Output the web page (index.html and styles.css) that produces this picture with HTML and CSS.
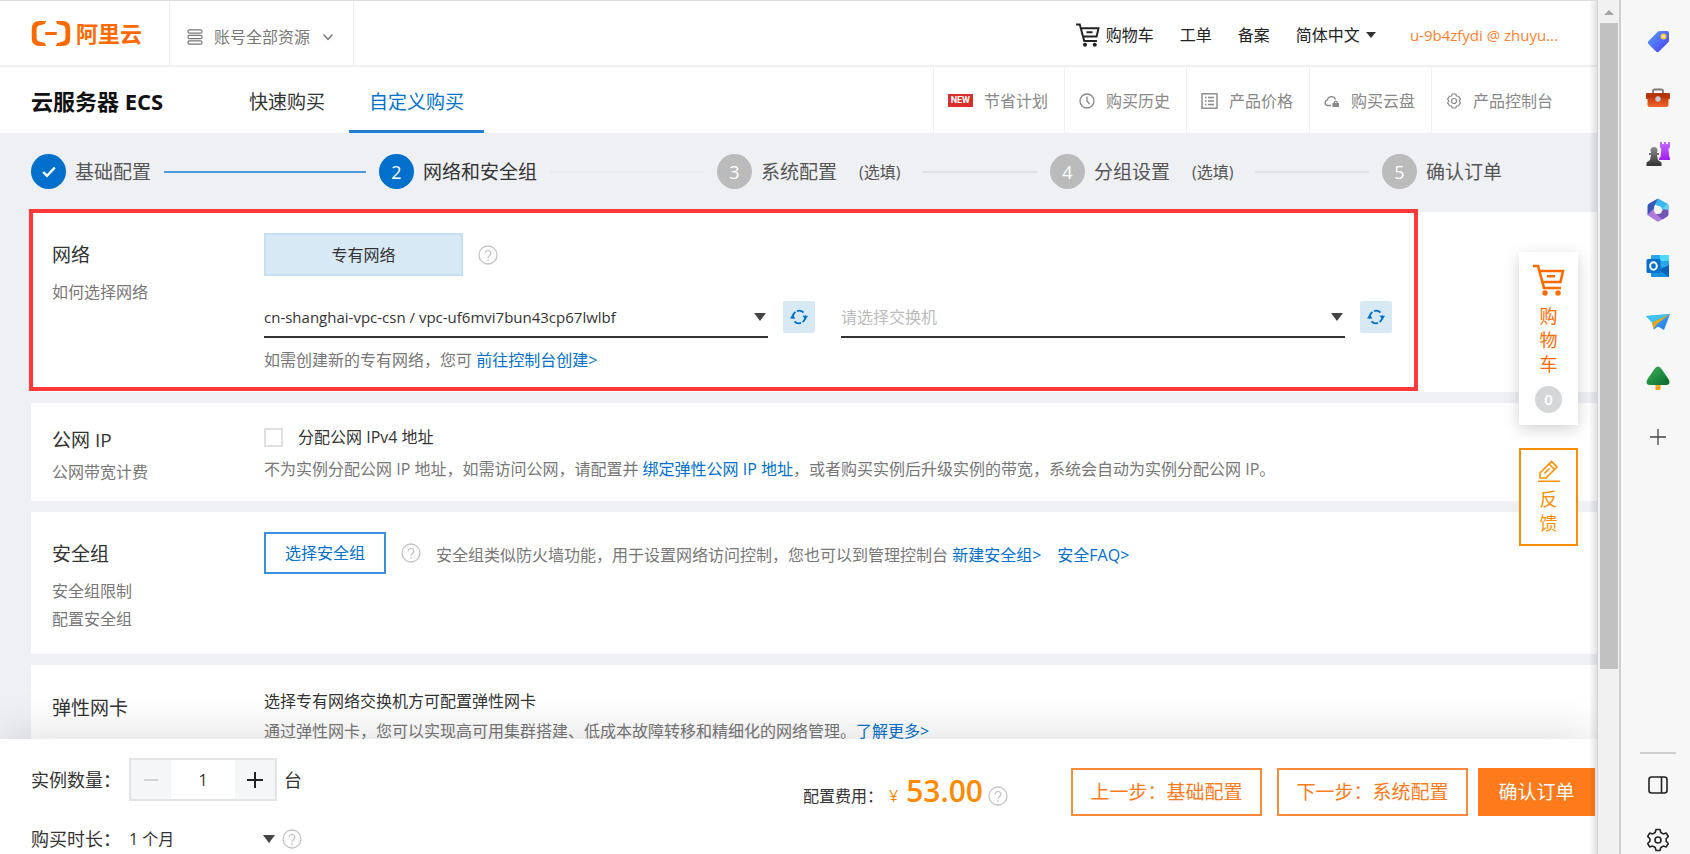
FILE: index.html
```html
<!DOCTYPE html>
<html lang="zh-CN">
<head>
<meta charset="utf-8">
<title>云服务器 ECS - 自定义购买</title>
<link rel="stylesheet" href="styles.css">
</head>
<body>
<svg class="defs" aria-hidden="true">
  <symbol id="i-help" viewBox="0 0 20 20"><circle cx="10" cy="10" r="9" fill="none" stroke="currentColor" stroke-width="1.3"/><path d="M7.2 8.2a2.8 2.8 0 1 1 4.4 2.3c-1 .7-1.6 1-1.6 2.2" fill="none" stroke="currentColor" stroke-width="1.3"/><circle cx="10" cy="14.8" r=".9" fill="currentColor"/></symbol>
  <symbol id="i-refresh" viewBox="0 0 18 18"><path d="M3 10.500A6.200 6.200 0 0 1 5.500 4M7 3.100A6.200 6.200 0 0 1 13.500 4.500M15 7.500a6.200 6.200 0 0 1-2.500 6.500M11 14.900a6.200 6.200 0 0 1-6.500-1.400" fill="none" stroke="currentColor" stroke-width="1.800"/><path d="M0 10.500l2.500-4 3 4zM12.500 7.800h5.500l-2.500 4z" fill="currentColor"/></symbol>
  <symbol id="i-cart" viewBox="0 0 32 32"><path d="M0 2h5l6 22h17M6.500 7H30l-2.500 11H9.500M14 12.300h8" fill="none" stroke="currentColor" stroke-width="2.600"/><circle cx="12" cy="29" r="2.700" fill="currentColor"/><circle cx="25" cy="29" r="2.700" fill="currentColor"/></symbol>
  <linearGradient id="g-tag" x1="0" y1="0" x2="1" y2="1"><stop offset="0" stop-color="#5fa5ff"/><stop offset="1" stop-color="#4338f0"/></linearGradient>
  <linearGradient id="g-box" x1="0" y1="0" x2="0" y2="1"><stop offset="0" stop-color="#c93f12"/><stop offset="1" stop-color="#f0642b"/></linearGradient>
  <linearGradient id="g-pawn" x1="0" y1="0" x2="0" y2="1"><stop offset="0" stop-color="#8d8d8d"/><stop offset="1" stop-color="#333"/></linearGradient>
  <linearGradient id="g-rook" x1="0" y1="0" x2="0" y2="1"><stop offset="0" stop-color="#c56bff"/><stop offset="1" stop-color="#a01cf5"/></linearGradient>
  <linearGradient id="g-tree" x1="0" y1="0" x2="1" y2="1"><stop offset="0" stop-color="#3cb45a"/><stop offset="1" stop-color="#08682c"/></linearGradient>
  <linearGradient id="g-plane" x1="0" y1="0" x2="1" y2="1"><stop offset="0" stop-color="#35c3f3"/><stop offset="1" stop-color="#2a6ff0"/></linearGradient>
</svg>

<div class="page">
  <header class="top">
    <a class="logo" href="#" aria-label="阿里云">
      <svg class="logo-mark" viewBox="0 0 40 26"><path d="M15 0H8Q0 0 0 8v10q0 8 8 8h7l-1.500-3-6-1.800Q5 20.500 5 18V8q0-2.500 2.500-3.200l6-1.800zM25 0h7q8 0 8 8v10q0 8-8 8h-7l1.500-3 6-1.800Q35 20.500 35 18V8q0-2.500-2.500-3.200l-6-1.800zM14 11.500h12v3H14z" fill="#ff6a00"/></svg>
      <span>阿里云</span>
    </a>
    <button class="account" type="button">
      <svg width="16" height="16" viewBox="0 0 16 16" fill="none" stroke="currentColor" stroke-width="1.200"><rect x="1" y=".8" width="14" height="3.400" rx="1.500"/><rect x="1" y="6.300" width="14" height="3.400" rx="1.500"/><rect x="1" y="11.800" width="14" height="3.400" rx="1.500"/></svg>
      <span>账号全部资源</span>
      <svg width="10" height="8" viewBox="0 0 10 8" fill="none" stroke="currentColor" stroke-width="1.500"><path d="M.5 1.500L5 6.500l4.500-5"/></svg>
    </button>
    <nav class="menu">
      <a class="menu-cart" href="#"><svg width="24" height="24"><use href="#i-cart"/></svg>购物车</a>
      <a href="#">工单</a>
      <a href="#">备案</a>
      <a class="lang" href="#">简体中文<i class="caret"></i></a>
      <a class="user" href="#">u-9b4zfydi @ zhuyu...</a>
    </nav>
  </header>

  <div class="product">
    <h1>云服务器 ECS</h1>
    <nav class="tabs">
      <a href="#">快速购买</a>
      <a class="active" href="#">自定义购买</a>
    </nav>
    <nav class="links">
      <a href="#"><span class="new">NEW</span>节省计划</a>
      <a href="#"><svg width="16" height="16" viewBox="0 0 16 16" fill="none" stroke="currentColor" stroke-width="1.300"><circle cx="8" cy="8" r="7"/><path d="M8 3.500V8l2.500 3"/></svg>购买历史</a>
      <a href="#"><svg width="17" height="16" viewBox="0 0 17 16" fill="none" stroke="currentColor" stroke-width="1.400"><rect x="1" y=".8" width="15" height="14.400"/><path d="M4 4.500h1.500M7 4.500h6M4 8h1.500M7 8h6M4 11.500h1.500M7 11.500h6"/></svg>产品价格</a>
      <a href="#"><svg width="16" height="14" viewBox="0 0 16 14" fill="none" stroke="currentColor" stroke-width="1.300"><path d="M7 11.500H3.500a2.700 2.700 0 0 1-.3-5.300A4.300 4.300 0 0 1 11.500 5.500"/><path d="M10.300 9.500V8.800a1.500 1.500 0 0 1 3 0v.7"/><rect x="8.500" y="9" width="6.500" height="4" fill="currentColor" stroke="none"/></svg>购买云盘</a>
      <a href="#"><svg width="16" height="16" viewBox="0 0 16 16" fill="none" stroke="currentColor" stroke-width="1.200"><path d="M6.300 1h3.400l.8 2 2 .2 1.900 2.900L13.200 8l1.200 1.900-1.900 2.900-2 .2-.8 2H6.300l-.8-2-2-.2-1.900-2.900L2.800 8 1.600 6.100l1.900-2.900 2-.2z"/><circle cx="8" cy="8" r="2.500"/></svg>产品控制台</a>
    </nav>
  </div>

  <main class="content">
    <ol class="steps">
      <li class="done"><span class="dot"><svg width="14" height="12" viewBox="0 0 14 12" fill="none" stroke="#fff" stroke-width="2.400"><path d="M1.200 6l3.800 3.800L12.800 1.500"/></svg></span><span>基础配置</span><i class="line"></i></li>
      <li class="current"><span class="dot">2</span><span>网络和安全组</span><i class="line"></i></li>
      <li><span class="dot">3</span><span>系统配置</span><small>(选填)</small><i class="line"></i></li>
      <li><span class="dot">4</span><span>分组设置</span><small>(选填)</small><i class="line"></i></li>
      <li><span class="dot">5</span><span>确认订单</span></li>
    </ol>

    <section class="card network">
      <div class="side"><h2>网络</h2><a href="#">如何选择网络</a></div>
      <div class="body">
        <div class="row"><button class="choice" type="button">专有网络</button><svg class="help"><use href="#i-help"/></svg></div>
        <div class="pickers">
          <div class="select vpc"><select aria-label="专有网络"><option>cn-shanghai-vpc-csn / vpc-uf6mvi7bun43cp67lwlbf</option></select></div>
          <button class="refresh" type="button" aria-label="刷新专有网络"><svg width="18" height="18"><use href="#i-refresh"/></svg></button>
          <div class="select empty"><select aria-label="交换机"><option>请选择交换机</option></select></div>
          <button class="refresh" type="button" aria-label="刷新交换机"><svg width="18" height="18"><use href="#i-refresh"/></svg></button>
        </div>
        <p>如需创建新的专有网络，您可 <a href="#">前往控制台创建&gt;</a></p>
      </div>
    </section>

    <section class="card public-ip">
      <div class="side"><h2>公网 IP</h2><a href="#">公网带宽计费</a></div>
      <div class="body">
        <label class="check"><input type="checkbox">分配公网 IPv4 地址</label>
        <p>不为实例分配公网 IP 地址，如需访问公网，请配置并 <a href="#">绑定弹性公网 IP 地址</a>，或者购买实例后升级实例的带宽，系统会自动为实例分配公网 IP。</p>
      </div>
    </section>

    <section class="card security">
      <div class="side"><h2>安全组</h2><a href="#">安全组限制</a><a href="#">配置安全组</a></div>
      <div class="body">
        <div class="row"><button class="outline" type="button">选择安全组</button><svg class="help"><use href="#i-help"/></svg><p>安全组类似防火墙功能，用于设置网络访问控制，您也可以到管理控制台 <a href="#">新建安全组&gt;</a><a class="faq" href="#">安全FAQ&gt;</a></p></div>
      </div>
    </section>

    <section class="card eni">
      <div class="side"><h2>弹性网卡</h2></div>
      <div class="body">
        <p class="strong">选择专有网络交换机方可配置弹性网卡</p>
        <p>通过弹性网卡，您可以实现高可用集群搭建、低成本故障转移和精细化的网络管理。<a href="#">了解更多&gt;</a></p>
      </div>
    </section>
  </main>

  <footer class="bar">
    <div class="order">
      <div class="field"><label for="count">实例数量：</label><div class="stepper"><button type="button" aria-label="减少" disabled><svg width="16" height="16" viewBox="0 0 16 16" stroke="#d2d5d8" stroke-width="2"><path d="M1 8h14"/></svg></button><input id="count" type="text" value="1"><button type="button" aria-label="增加"><svg width="18" height="18" viewBox="0 0 18 18" stroke="#222" stroke-width="2"><path d="M1 9h16M9 1v16"/></svg></button></div><span class="unit">台</span></div>
      <div class="field"><label for="period">购买时长：</label><div class="select period"><select id="period"><option>1 个月</option></select></div><svg class="help"><use href="#i-help"/></svg></div>
    </div>
    <div class="cost"><span>配置费用：</span><span class="yen">¥</span><strong>53.00</strong><svg class="help"><use href="#i-help"/></svg></div>
    <div class="actions">
      <button type="button">上一步：基础配置</button>
      <button type="button">下一步：系统配置</button>
      <button class="primary" type="button">确认订单</button>
    </div>
  </footer>

  <aside class="floats">
    <a class="float-cart" href="#"><svg width="32" height="32"><use href="#i-cart"/></svg><span>购物车</span><b>0</b></a>
    <a class="feedback" href="#"><svg width="22" height="22" viewBox="0 0 22 22" fill="none" stroke="currentColor" stroke-width="1.600"><path d="M2 18v-5L13.500 1.500l5.500 5.500L8 18zM11 4l5.500 5.500M6.500 13.500l5-5M0 21.200h22"/></svg><span>反馈</span></a>
  </aside>
</div>

<div class="scrollbar"><i class="up"></i><i class="thumb"></i></div>

<aside class="rail">
  <button type="button" aria-label="购物"><svg width="24" height="24" viewBox="0 0 24 24"><path d="M2.500 11L11.500 2q1-1 2.500-1h7q2 0 2 2v7q0 1.500-1 2.500l-9 9q-1.500 1.500-3 0l-7.500-7.500q-1.500-1.500 0-3z" fill="url(#g-tag)"/><circle cx="17.500" cy="6.500" r="3" fill="#f6c945"/><circle cx="17.500" cy="6.500" r="1.200" fill="#fff2b8"/></svg></button>
  <button type="button" aria-label="工具"><svg width="24" height="24" viewBox="0 0 24 24"><path d="M7 8V5q0-1.500 1.500-1.500h7Q17 3.500 17 5v3" fill="none" stroke="#7b7b7b" stroke-width="1.800"/><path d="M1 7h22q1 0 1 1v5H0V8q0-1 1-1z" fill="#b8360e"/><path d="M1.500 12h21v7q0 2-2 2h-17q-2 0-2-2z" fill="url(#g-box)"/><circle cx="12" cy="13" r="2.700" fill="#c5c8cc"/></svg></button>
  <button type="button" aria-label="游戏"><svg width="24" height="24" viewBox="0 0 24 24"><path d="M14 0h2v2h2V0h2v2h2V0h2v5l-1.500 2 .8 8 1.200 1v2H13v-2l1.500-1 .8-8L14 5z" fill="url(#g-rook)"/><path d="M4.500 8.500a3.500 3.500 0 1 1 7 0L11 11h2v2h-2l1 5 3.500 2.500V24H.5v-3.500L4 18l1-5H3v-2h2z" fill="url(#g-pawn)"/></svg></button>
  <button type="button" aria-label="Microsoft 365"><svg width="24" height="24" viewBox="0 0 24 24"><path d="M12 .5l9.500 5.300v6.700l-6-1L12 8 8.500 6z" fill="#3cb6ee"/><path d="M12 .5L3 5.500q-1.500 1-1.500 3V17L8 14V9z" fill="#3557b7"/><path d="M1.500 17l9 6q1.500 1 3 0l5-3-9-4.500-2-5z" fill="#b07bdc"/><path d="M21.500 5.800q1 1 1 2.500v8q0 1.500-1.500 2.500l-4.500 2.700L10 16l6-3z" fill="#7255b5"/><path d="M16 11l6.500 1V8q0-1.500-1-2.200z" fill="#62d4f3"/><circle cx="12" cy="12" r="4" fill="#f7f7f7"/></svg></button>
  <button type="button" aria-label="Outlook"><svg width="24" height="24" viewBox="0 0 24 24"><path d="M6 1h16q1 0 1 1v11H5V2q0-1 1-1z" fill="#28a8ea"/><path d="M14 1h8q1 0 1 1v5h-9z" fill="#50d9ff"/><path d="M5 13h18v9q0 1-1 1H6q-1 0-1-1z" fill="#1490df"/><path d="M23 11v12L13 16z" fill="#0a63b8"/><rect x=".5" y="5" width="14" height="14" rx="1.500" fill="#0a6fcb"/><ellipse cx="7.500" cy="12" rx="3.300" ry="3.700" fill="none" stroke="#fff" stroke-width="2"/></svg></button>
  <button type="button" aria-label="投递"><svg width="24" height="24" viewBox="0 0 24 24"><path d="M0 6l24-2-6 16-6-3.500-4 3-2-7z" fill="url(#g-plane)"/><path d="M0 6l24-2L6 12.500z" fill="#3fc3f4"/><path d="M24 4L6 12.500l1.500 6.500L11 14z" fill="#e8a621"/></svg></button>
  <button type="button" aria-label="树"><svg width="24" height="24" viewBox="0 0 24 24"><rect x="9.500" y="17" width="5" height="7" rx="1" fill="#f2a31c"/><path d="M12 .5q2 0 4 3l3 4.500q4.500 6 4.500 8 0 3-3.500 3H4q-3.500 0-3.500-3 0-2 4.500-8L8 3.500q2-3 4-3z" fill="url(#g-tree)"/></svg></button>
  <button type="button" aria-label="添加"><svg width="16" height="16" viewBox="0 0 16 16" stroke="#444" stroke-width="1.300"><path d="M0 8h16M8 0v16"/></svg></button>
  <div class="rail-end">
    <button type="button" aria-label="侧栏"><svg width="20" height="18" viewBox="0 0 20 18" fill="none" stroke="#222" stroke-width="1.600"><rect x="1" y="1" width="18" height="16" rx="2.500"/><path d="M13.500 1v16"/></svg></button>
    <button type="button" aria-label="设置"><svg width="24" height="24" viewBox="0 0 24 24" fill="none" stroke="#222" stroke-width="1.600"><path d="M10 1.500h4l.8 3 2.500 1.400 3-.8 2 3.400-2.200 2.200v2.600l2.200 2.200-2 3.400-3-.8-2.500 1.400-.8 3h-4l-.8-3-2.500-1.400-3 .8-2-3.400 2.200-2.200v-2.600L1.700 8.500l2-3.400 3 .8 2.500-1.400z" stroke-linejoin="round"/><circle cx="12" cy="12" r="3"/></svg></button>
  </div>
</aside>
</body>
</html>
```
FILE: styles.css
```css
* {
  box-sizing: border-box;
}

body {
  margin: 0;
  height: 100vh;
  display: flex;
  overflow: hidden;
  font: 16px/24px "Open Sans", "Noto Sans CJK SC", sans-serif;
  color: #333;
  background: #fff;
}

h1, h2, p, ol {
  margin: 0;
  padding: 0;
  font-weight: 400;
}

a {
  color: #0070cc;
  text-decoration: none;
}

button, input, select {
  font: inherit;
  color: inherit;
  margin: 0;
  padding: 0;
  border: 0;
  border-radius: 0;
  background: none;
}

svg {
  display: block;
  flex: none;
}

.defs {
  position: absolute;
  width: 0;
  height: 0;
}

.page {
  position: relative;
  flex: 1;
  min-width: 0;
  display: flex;
  flex-direction: column;
  overflow: hidden;
  border-top: 1px solid #dcdcdc;
}

.page::after {
  content: "";
  position: absolute;
  top: 0;
  right: 0;
  bottom: 0;
  width: 8px;
  background: linear-gradient(to right, transparent, rgba(0, 0, 0, .12));
}

/* top bar */
.top {
  display: flex;
  height: 66px;
  flex: none;
  border-bottom: 2px solid #f0f0f0;
}

.logo {
  display: flex;
  align-items: center;
  gap: 5px;
  width: 170px;
  padding-left: 31px;
  border-right: 1px solid #ebebeb;
  color: #ff6a00;
  font-size: 22px;
  font-weight: 700;
}

.logo-mark {
  width: 40px;
  height: 25px;
}

.account {
  display: flex;
  align-items: center;
  gap: 11px;
  width: 184px;
  padding: 8px 0 0 17px;
  border-right: 1px solid #ebebeb;
  color: #777;
}

.account svg:last-child {
  margin-left: 2px;
}

.menu {
  display: flex;
  align-items: center;
  gap: 26px;
  margin-left: auto;
  padding: 4px 39px 0 0;
}

.menu a {
  color: #222;
}

.menu .menu-cart,
.menu .lang {
  display: flex;
  align-items: center;
  gap: 6px;
}

.menu .user {
  color: #ff7f2e;
  margin-left: 8px;
  font-size: 15px;
}

.caret {
  border: 5px solid transparent;
  border-top: 6px solid #333;
  border-bottom: 0;
}

/* product bar */
.product {
  display: flex;
  align-items: stretch;
  height: 66px;
  flex: none;
}

.product h1 {
  width: 193px;
  padding: 22px 0 0 31px;
  font-size: 22px;
  font-weight: 700;
  color: #111;
  white-space: nowrap;
}

.tabs {
  display: flex;
  margin-left: 31px;
}

.tabs a {
  padding: 23px 20px 0;
  font-size: 19px;
  color: #333;
  border-bottom: 3px solid transparent;
}

.tabs a:first-child {
  padding: 23px 24px 0 25px;
}

.tabs .active {
  color: #0070cc;
  border-color: #1f7fd2;
}

.links {
  display: flex;
  margin-left: auto;
  padding-right: 28px;
}

.links a {
  display: flex;
  align-items: center;
  gap: 11px;
  padding: 1px 16px 0 14px;
  border-left: 1px solid #f0f0f0;
  color: #888;
}

.new {
  padding: 0 3px;
  background: #d9302c;
  color: #fff;
  font: 700 9px/13px Roboto, sans-serif;
}

/* scrolling content */
.content {
  flex: 1;
  min-height: 0;
  overflow: hidden;
  display: flex;
  flex-direction: column;
  gap: 11px;
  padding-left: 31px;
  background: #eff0f4;
}

.steps {
  display: grid;
  grid-template-columns: 348fr 338fr 333fr 332fr auto;
  align-items: center;
  height: 79px;
  flex: none;
  margin-bottom: -11px;
  padding: 0 95px 2px 0;
  list-style: none;
  font-size: 19px;
}

.steps li {
  display: flex;
  align-items: center;
  white-space: nowrap;
  color: #555;
}

.steps .current {
  color: #333;
}

.dot {
  display: flex;
  align-items: center;
  justify-content: center;
  width: 35px;
  height: 35px;
  margin-right: 9px;
  border-radius: 50%;
  background: #bbb;
  color: #fff;
  font-size: 18px;
}

.done .dot,
.current .dot {
  background: #0070cc;
}

.steps small {
  margin: 0 9px 0 22px;
  font-size: 16px;
}

.line {
  flex: 1;
  height: 2px;
  margin: 0 13px;
  background: #e0e1e5;
}

.done .line {
  background: #4c9bdc;
}

.current .line {
  background: #e9eaed;
}

.card {
  position: relative;
  display: flex;
  flex: none;
  padding-left: 21px;
  background: #fff;
}

.side {
  display: flex;
  flex-direction: column;
  gap: 4px;
  width: 212px;
  flex: none;
}

.side h2 {
  font-size: 19px;
  line-height: 24px;
}

.side a,
.body p {
  color: #777;
}

.body p a {
  color: #0070cc;
}

.body {
  flex: 1;
  min-width: 0;
  display: flex;
  flex-direction: column;
  white-space: nowrap;
}

.body .strong {
  color: #333;
}

.row {
  display: flex;
  align-items: center;
  gap: 15px;
}

.help {
  width: 20px;
  height: 20px;
  color: #c4c4c4;
}

.network {
  padding: 21px 0 19px 21px;
}

.network::after {
  content: "";
  position: absolute;
  inset: -3px 179px 1px -2px;
  border: 4px solid #ff3838;
}

.network .side,
.security .side {
  padding-top: 10px;
}

.network h2,
.security h2 {
  margin-bottom: 9px;
}

.choice {
  width: 199px;
  height: 43px;
  border: 2px solid #c5dff5;
  background: #d8e9f6;
}

.pickers {
  display: flex;
  align-items: flex-start;
  margin: 25px 205px 10px 0;
}

.select {
  position: relative;
  flex: 1;
  border-bottom: 2px solid #333;
}

.select::after {
  content: "";
  position: absolute;
  right: 2px;
  top: 12px;
  border: 6px solid transparent;
  border-top: 8px solid #444;
  border-bottom: 0;
  pointer-events: none;
}

.select select {
  display: block;
  width: 100%;
  height: 35px;
  padding-bottom: 4px;
  appearance: none;
}

.vpc {
  font-size: 15px;
}

.empty {
  color: #bbb;
}

.refresh {
  display: flex;
  align-items: center;
  justify-content: center;
  width: 32px;
  height: 32px;
  margin: 0 26px 0 15px;
  border-radius: 2px;
  background: #d8e9f6;
  color: #0070cc;
}

.refresh:last-child {
  margin-right: 0;
}

.network .body {
  padding-bottom: 1px;
}

.public-ip {
  padding: 22px 0 17px 21px;
}

.public-ip .side {
  padding-top: 3px;
  gap: 8px;
}

.public-ip .body {
  gap: 8px;
}

.check {
  display: flex;
  align-items: center;
  gap: 15px;
}

.check input {
  appearance: none;
  width: 19px;
  height: 19px;
  border: 2px solid #e0e0e0;
}

.security {
  padding: 20px 0 23px 21px;
}

.security p {
  padding-top: 4px;
}

.outline {
  width: 122px;
  height: 42px;
  border: 2px solid #3a90d8;
  color: #0070cc;
}

.faq {
  margin-left: 16px;
}

.eni {
  padding: 24px 0 24px 21px;
}

.eni .side {
  padding-top: 7px;
}

.eni .body {
  gap: 6px;
}

/* order bar */
.bar {
  position: relative;
  display: flex;
  align-items: flex-start;
  flex: none;
  height: 115px;
  padding-left: 31px;
  background: #fff;
  box-shadow: 0 0 50px rgba(0, 0, 0, .15);
}

.order {
  display: flex;
  flex-direction: column;
  gap: 20px;
  padding-top: 19px;
}

.field {
  display: flex;
  align-items: center;
}

.field label {
  width: 98px;
  font-size: 18px;
  white-space: nowrap;
}

.stepper {
  display: flex;
  width: 148px;
  height: 43px;
  border: 2px solid #e3e4e6;
}

.stepper button {
  display: flex;
  align-items: center;
  justify-content: center;
  width: 40px;
  background: #f5f6f8;
}

.stepper input {
  flex: 1;
  min-width: 0;
  text-align: center;
}

.unit {
  margin-left: 7px;
  font-size: 18px;
}

.period {
  flex: none;
  width: 148px;
  border: 0;
}

.period select {
  padding-bottom: 0;
}

.period::after {
  top: 14px;
}

.field .help {
  margin-left: 5px;
}

.cost {
  display: flex;
  align-items: center;
  margin-left: auto;
  padding-top: 42px;
  color: #333;
}

.cost strong {
  margin: -10px 5px 0 8px;
  color: #ff8a00;
  font-size: 30px;
  font-weight: 600;
  line-height: 40px;
}

.yen {
  margin-left: 6px;
  color: #ff8a00;
}

.actions {
  display: flex;
  padding: 29px 2px 0 63px;
}

.actions button {
  width: 191px;
  height: 48px;
  margin-right: 15px;
  border: 2px solid #ff8a3a;
  color: #ff7a1a;
  font-size: 19px;
}

.actions button:nth-child(2) {
  margin-right: 10px;
}

.actions .primary {
  width: 117px;
  margin: 0;
  border-color: #ff7a1a;
  background: #ff7a1a;
  color: #fff;
}

/* floating shortcuts */
.floats {
  position: absolute;
  top: 251px;
  right: 19px;
  display: flex;
  flex-direction: column;
  gap: 23px;
  width: 59px;
}

.floats a {
  display: flex;
  flex-direction: column;
  align-items: center;
  background: #fff;
  font-size: 18px;
}

.floats span {
  width: 18px;
}

.float-cart {
  padding: 12px 0 10px;
  color: #ff6a00;
  box-shadow: 0 4px 14px rgba(0, 0, 0, .18);
}

.float-cart span {
  margin: 8px 0;
}

.float-cart b {
  width: 27px;
  margin: 2px 0;
  border-radius: 50%;
  background: #d5d6d8;
  color: #fff;
  font-size: 15px;
  font-weight: 600;
  line-height: 27px;
  text-align: center;
}

.floats .feedback {
  padding: 10px 0 9px;
  border: 2px solid #ff8f00;
  color: #ff8f00;
}

.feedback span {
  margin-top: 5px;
}

/* window scrollbar */
.scrollbar {
  display: flex;
  flex-direction: column;
  width: 24px;
  padding: 0 1px 0 2px;
  background: #f1f1f1;
  border-left: 1px solid #d4d4d8;
  border-right: 2px solid #cfcfcf;
}

.up {
  margin: 10px auto 8px;
  border: 5px solid transparent;
  border-top: 0;
  border-bottom: 5px solid #a5a5a5;
}

.thumb {
  flex: none;
  height: calc(76vh - 3px);
  background: #c1c1c1;
}

/* browser side rail */
.rail {
  display: flex;
  flex-direction: column;
  align-items: center;
  gap: 32px;
  width: 69px;
  padding: 30px 0 2px 4px;
  background: #f7f7f7;
}

.rail button {
  display: flex;
  align-items: center;
  justify-content: center;
  width: 36px;
  height: 24px;
}

.rail > button:nth-of-type(8) {
  margin-top: 3px;
}

.rail-end {
  display: flex;
  flex-direction: column;
  align-items: center;
  gap: 31px;
  margin-top: auto;
  padding-top: 19px;
  border-top: 2px solid #cfcfcf;
}
```
